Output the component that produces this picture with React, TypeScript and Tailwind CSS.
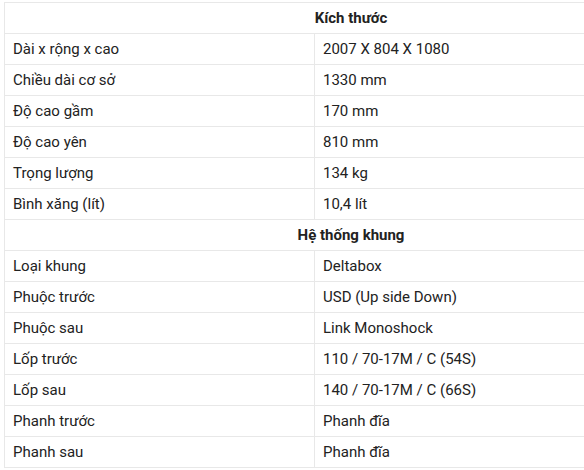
import React from "react";

type Row = { h?: string; k?: string; v?: string };

const rows: Row[] = [
  { h: "Kích thước" },
  { k: "Dài x rộng x cao", v: "2007 X 804 X 1080" },
  { k: "Chiều dài cơ sở", v: "1330 mm" },
  { k: "Độ cao gầm", v: "170 mm" },
  { k: "Độ cao yên", v: "810 mm" },
  { k: "Trọng lượng", v: "134 kg" },
  { k: "Bình xăng (lít)", v: "10,4 lít" },
  { h: "Hệ thống khung" },
  { k: "Loại khung", v: "Deltabox" },
  { k: "Phuộc trước", v: "USD (Up side Down)" },
  { k: "Phuộc sau", v: "Link Monoshock" },
  { k: "Lốp trước", v: "110 / 70-17M / C (54S)" },
  { k: "Lốp sau", v: "140 / 70-17M / C (66S)" },
  { k: "Phanh trước", v: "Phanh đĩa" },
  { k: "Phanh sau", v: "Phanh đĩa" },
];

export default function App() {
  return (
    <div
      className="w-[584px] h-[470px] overflow-hidden bg-white text-[#222222]"
      style={{ fontFamily: "Roboto, 'Noto Sans', sans-serif" }}
    >
      <div className="pl-[4px] pt-[2px]">
        <table className="w-[694px] border-collapse text-[15px] leading-[30px] table-fixed">
          <colgroup>
            <col className="w-[310px]" />
            <col />
          </colgroup>
          <tbody>
            {rows.map((r, i) =>
              r.h ? (
                <tr key={i}>
                  <td
                    colSpan={2}
                    className="border border-[#e8e8e8] text-center font-bold h-[31px] p-0"
                  >
                    {r.h}
                  </td>
                </tr>
              ) : (
                <tr key={i}>
                  <td className="border border-[#e8e8e8] pl-[8px] h-[31px] p-0 py-0">
                    {r.k}
                  </td>
                  <td className="border border-[#e8e8e8] pl-[8px] h-[31px] p-0 py-0">
                    {r.v}
                  </td>
                </tr>
              )
            )}
          </tbody>
        </table>
      </div>
    </div>
  );
}
